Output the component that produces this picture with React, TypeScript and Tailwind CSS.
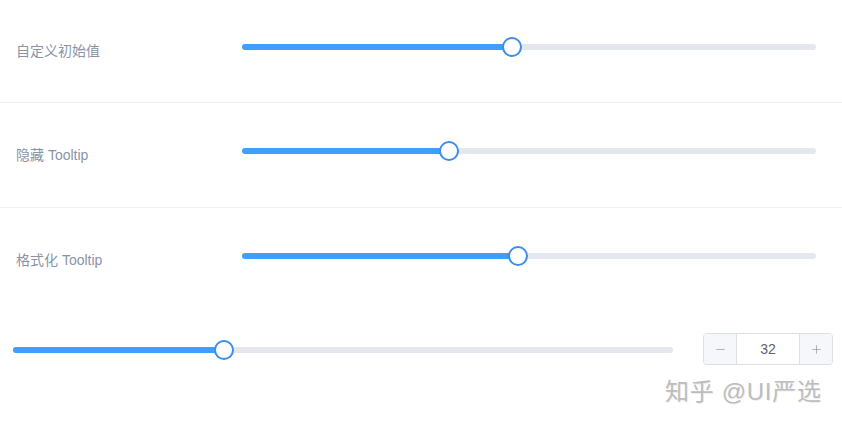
import { useState } from 'react';
import { Minus, Plus } from 'lucide-react';

const FONT = '"Liberation Sans", "Noto Sans CJK SC", sans-serif';

interface SliderProps {
  value: number;
  className?: string;
}

function Slider({ value, className = '' }: SliderProps) {
  return (
    <div className={`relative h-[6px] rounded-full bg-[#e4e7ed] ${className}`}>
      <div className="absolute left-0 top-0 h-full rounded-full bg-[#409eff]" style={{ width: `${value}%` }} />
      <div
        className="absolute top-1/2 h-5 w-5 -translate-x-1/2 -translate-y-1/2 rounded-full border-2 border-[#3d8eea] bg-white"
        style={{ left: `${value}%` }}
      />
    </div>
  );
}

const ROWS = [
  { label: '自定义初始值', value: 47, h: 'h-[102px]' },
  { label: '隐藏 Tooltip', value: 36, h: 'h-[104px]' },
  { label: '格式化 Tooltip', value: 48, h: 'h-[104px]' },
];

export default function App() {
  const [num, setNum] = useState(32);

  return (
    <div className="relative h-[424px] w-[842px] overflow-hidden bg-white" style={{ fontFamily: FONT }}>
      {ROWS.map((row, i) => (
        <div
          key={row.label}
          className={`flex items-center pl-4 pr-[26px] ${row.h} ${i < ROWS.length - 1 ? 'box-content border-b border-[#eef0f4]' : ''}`}
        >
          <span className="w-[226px] text-[14px] text-[#8a94a6]">{row.label}</span>
          <Slider value={row.value} className="mb-2 flex-1" />
        </div>
      ))}

      {/* slider with number input */}
      <div className="mt-[21px] flex items-center pl-[13px]">
        <Slider value={num} className="mt-[2px] w-[660px]" />
        <div className="ml-[30px] flex h-[32px] w-[130px] overflow-hidden rounded-[4px] border border-[#dcdfe6] text-[14px]">
          <button
            type="button"
            onClick={() => setNum(Math.max(0, num - 1))}
            className="flex w-[33px] items-center justify-center border-r border-[#dcdfe6] bg-[#f5f7fa] text-[#909399]"
          >
            <Minus size={13} strokeWidth={1.3} />
          </button>
          <div className="flex flex-1 items-center justify-center text-[#606266]">{num}</div>
          <button
            type="button"
            onClick={() => setNum(Math.min(100, num + 1))}
            className="flex w-[33px] items-center justify-center border-l border-[#dcdfe6] bg-[#f5f7fa] text-[#909399]"
          >
            <Plus size={13} strokeWidth={1.3} />
          </button>
        </div>
      </div>

      <div className="absolute left-[665px] top-[374px] text-[24px] tracking-[0.7px] text-[#bdbdbd]" style={{ textShadow: '1px 1px 0 rgba(0,0,0,0.08)' }}>
        知乎 @UI严选
      </div>
    </div>
  );
}
